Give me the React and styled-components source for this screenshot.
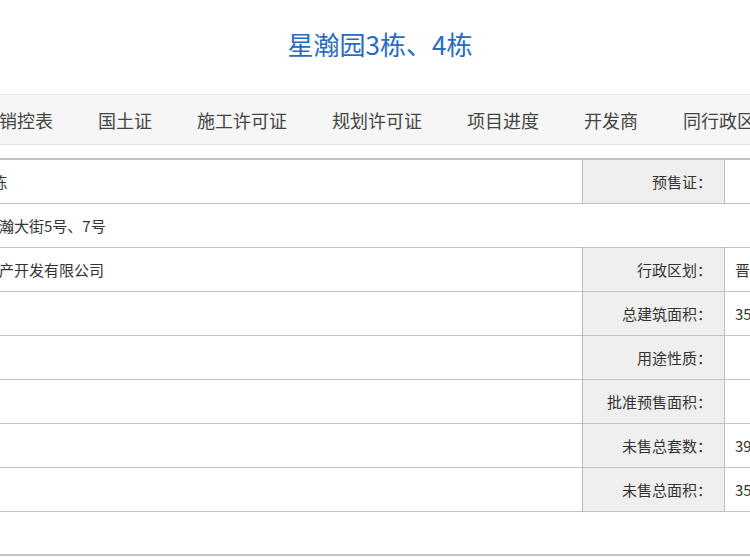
import React from "react";
import styled, { createGlobalStyle } from "styled-components";

const GlobalStyle = createGlobalStyle`
  html, body {
    margin: 0;
    padding: 0;
    background: #ffffff;
    overflow: hidden;
  }
  body {
    font-family: "Noto Sans CJK SC", "Microsoft YaHei", "Liberation Sans", sans-serif;
    color: #333333;
  }
`;

const Page = styled.div`
  width: 1200px;
  margin-left: -220px;
`;

const Title = styled.h1`
  margin: 0;
  height: 88px;
  line-height: 88px;
  text-align: center;
  font-size: 26px;
  font-weight: normal;
  color: #2a6bbf;
`;

const TabBar = styled.ul`
  display: flex;
  gap: 45px;
  margin: 6px 0 0;
  padding: 0 0 0 102px;
  list-style: none;
  height: 49px;
  align-items: center;
  background: #f6f6f6;
  border-top: 1px solid #e8e8e8;
  border-bottom: 1px solid #e3e3e3;
  white-space: nowrap;
`;

const Tab = styled.li`
  font-size: 18px;
  color: #444444;
  flex: none;
`;

const Table = styled.table`
  margin-top: 13px;
  width: 1200px;
  table-layout: fixed;
  border-collapse: collapse;
  border-top: 2px solid #c4c4c4;
  border-bottom: 2px solid #c4c4c4;
  font-size: 15px;
`;

const Row = styled.tr`
  height: 44px;
  border-bottom: 1px solid #c2c2c2;
`;

const LabelCell = styled.td`
  background: #efefef;
  text-align: right;
  padding: 0 12px 0 0;
  border-left: 1px solid #bdbdbd;
  border-right: 1px solid #bdbdbd;
  color: #333333;
  white-space: nowrap;
`;

const ValueCell = styled.td`
  padding: 0 0 0 10px;
  color: #333333;
  white-space: nowrap;
  overflow: hidden;
`;

const tabs = [
  "楼盘信息",
  "销控表",
  "国土证",
  "施工许可证",
  "规划许可证",
  "项目进度",
  "开发商",
  "同行政区楼盘",
];

const rows = [
  { l: "项目名称：", v: "星瀚园3栋", r: "预售证：", rv: "" },
  { l: "项目地址：", v: "晋源区星瀚大街5号、7号", full: true },
  { l: "开发商：", v: "太原房地产开发有限公司", r: "行政区划：", rv: "晋源区" },
  { l: "建筑结构：", v: "", r: "总建筑面积：", rv: "35286.57平方米" },
  { l: "项目类型：", v: "", r: "用途性质：", rv: "" },
  { l: "预售日期：", v: "", r: "批准预售面积：", rv: "" },
  { l: "总套数：", v: "", r: "未售总套数：", rv: "392套" },
  { l: "已售面积：", v: "", r: "未售总面积：", rv: "35286.57平方米" },
  { l: "备注：", v: "", full: true },
];

export default function App() {
  return (
    <>
      <GlobalStyle />
      <Page>
        <Title>星瀚园3栋、4栋</Title>
        <TabBar>
          {tabs.map((t) => (
            <Tab key={t}>{t}</Tab>
          ))}
        </TabBar>
        <Table>
          <colgroup>
            <col style={{ width: 148 }} />
            <col style={{ width: 654 }} />
            <col style={{ width: 142 }} />
            <col style={{ width: 256 }} />
          </colgroup>
          <tbody>
            {rows.map((row, i) => (
              <Row key={i}>
                <LabelCell>{row.l}</LabelCell>
                {row.full ? (
                  <ValueCell colSpan={3}>{row.v}</ValueCell>
                ) : (
                  <>
                    <ValueCell>{row.v}</ValueCell>
                    <LabelCell>{row.r}</LabelCell>
                    <ValueCell>{row.rv}</ValueCell>
                  </>
                )}
              </Row>
            ))}
          </tbody>
        </Table>
      </Page>
    </>
  );
}
